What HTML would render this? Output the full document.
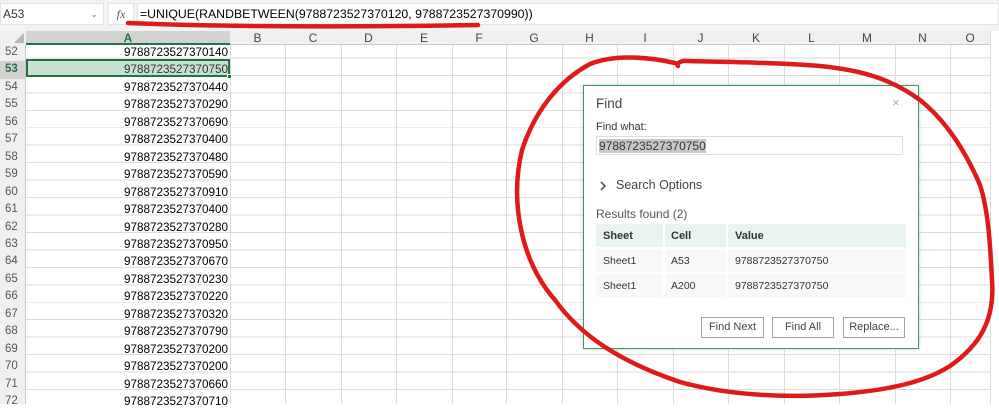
<!DOCTYPE html>
<html><head><meta charset="utf-8"><style>
*{margin:0;padding:0;box-sizing:border-box}
body{width:999px;height:404px;overflow:hidden;background:#fff;position:relative;font-family:"Liberation Sans",sans-serif;color:#000}
.abs{position:absolute}
.grid{left:26px;top:41px;width:964px;height:363px;
background-image:repeating-linear-gradient(to bottom,transparent 0,transparent 16.45px,#dadcdd 16.45px,#dadcdd 17.45px);}
.vl{position:absolute;top:31px;width:1px;height:373px;background:#dadcdd}
.hdr{left:0;top:31px;width:990px;height:14px;background:#f0f0f0;border-bottom:1px solid #c8c8c8}
.ch{position:absolute;top:0;height:14px;font-size:12px;line-height:14px;text-align:center;color:#444}
.rh{left:0;top:41px;width:26px;height:363px;background:#f0f0f0;border-right:1px solid #c8c8c8}
.rn{position:absolute;left:0;width:25px;font-size:11.5px;color:#555;text-align:left;padding-left:5px;height:17.45px;line-height:17.45px}
.num{position:absolute;left:26px;width:202px;text-align:right;font-size:11.7px;height:17.45px;line-height:17.45px}
.dlg{left:583px;top:85px;width:336px;height:264px;background:#fff;border:1px solid #3e9b5d;box-shadow:0 0 4px rgba(0,0,0,.2)}
.t{position:absolute;font-size:12px;color:#333}
.btn{position:absolute;top:231px;height:21px;border:1px solid #a0a0a0;font-size:11px;line-height:19px;text-align:center;color:#444;background:#fff}
</style></head><body>
<div class="abs" style="left:0;top:0;width:999px;height:31px;background:#f3f3f3"></div>
<div class="abs" style="left:0;top:3px;width:104px;height:22px;background:#fff;border:1px solid #e3e3e3;font-size:12px;line-height:20px;padding-left:2px;color:#333">A53<span style="position:absolute;right:5px;top:0;font-size:9px;color:#777">⌄</span></div>
<div class="abs" style="left:108px;top:3px;width:26px;height:22px;background:#fff;border:1px solid #e3e3e3;font-family:'Liberation Serif',serif;font-style:italic;font-size:12px;line-height:20px;text-align:center;color:#555">fx</div>
<div class="abs" style="left:137px;top:3px;width:862px;height:22px;background:#fff;border:1px solid #e3e3e3;font-size:12.3px;line-height:20px;padding-left:2px">=UNIQUE(RANDBETWEEN(9788723527370120, 9788723527370990))</div>

<div class="abs grid"></div>
<div class="vl" style="left:230px"></div><div class="vl" style="left:285px"></div><div class="vl" style="left:341px"></div><div class="vl" style="left:396px"></div><div class="vl" style="left:452px"></div><div class="vl" style="left:506px"></div><div class="vl" style="left:562px"></div><div class="vl" style="left:617px"></div><div class="vl" style="left:673px"></div><div class="vl" style="left:728px"></div><div class="vl" style="left:784px"></div><div class="vl" style="left:839px"></div><div class="vl" style="left:895px"></div><div class="vl" style="left:950px"></div><div class="vl" style="left:990px"></div>

<div class="abs rh">
<div class="rn" style="top:3px">52</div><div class="rn" style="top:20.45px;color:#217346;font-weight:bold;background:#d2d2d2">53</div><div class="rn" style="top:37.9px">54</div><div class="rn" style="top:55.35px">55</div><div class="rn" style="top:72.8px">56</div><div class="rn" style="top:90.25px">57</div><div class="rn" style="top:107.7px">58</div><div class="rn" style="top:125.15px">59</div><div class="rn" style="top:142.6px">60</div><div class="rn" style="top:160.05px">61</div><div class="rn" style="top:177.5px">62</div><div class="rn" style="top:194.95px">63</div><div class="rn" style="top:212.4px">64</div><div class="rn" style="top:229.85px">65</div><div class="rn" style="top:247.3px">66</div><div class="rn" style="top:264.75px">67</div><div class="rn" style="top:282.2px">68</div><div class="rn" style="top:299.65px">69</div><div class="rn" style="top:317.1px">70</div><div class="rn" style="top:334.55px">71</div><div class="rn" style="top:352px">72</div>
</div>

<div class="abs" style="left:26px;top:59px;width:204px;height:18px;background:#c5e1cf;border:2px solid #217346"></div>
<div class="abs" style="left:227px;top:74px;width:5px;height:5px;background:#217346;border:1px solid #fff"></div>

<div class="num" style="top:44px">9788723527370140</div>
<div class="num" style="top:61.45px;color:#333">9788723527370750</div>
<div class="num" style="top:78.9px">9788723527370440</div>
<div class="num" style="top:96.35px">9788723527370290</div>
<div class="num" style="top:113.8px">9788723527370690</div>
<div class="num" style="top:131.25px">9788723527370400</div>
<div class="num" style="top:148.7px">9788723527370480</div>
<div class="num" style="top:166.15px">9788723527370590</div>
<div class="num" style="top:183.6px">9788723527370910</div>
<div class="num" style="top:201.05px">9788723527370400</div>
<div class="num" style="top:218.5px">9788723527370280</div>
<div class="num" style="top:235.95px">9788723527370950</div>
<div class="num" style="top:253.4px">9788723527370670</div>
<div class="num" style="top:270.85px">9788723527370230</div>
<div class="num" style="top:288.3px">9788723527370220</div>
<div class="num" style="top:305.75px">9788723527370320</div>
<div class="num" style="top:323.2px">9788723527370790</div>
<div class="num" style="top:340.65px">9788723527370200</div>
<div class="num" style="top:358.1px">9788723527370200</div>
<div class="num" style="top:375.55px">9788723527370660</div>
<div class="num" style="top:393px">9788723527370710</div>

<div class="abs hdr">
<div class="abs" style="left:0;top:0;width:26px;height:14px;background:#f0f0f0"><div style="position:absolute;right:2px;bottom:2px;width:0;height:0;border-left:10px solid transparent;border-bottom:10px solid #b8b8b8"></div></div>
<div class="ch" style="left:26px;width:204px;background:#d2d2d2;color:#217346;font-weight:bold;border-bottom:2px solid #217346">A</div>
<div class="ch" style="left:230px;width:55px">B</div><div class="ch" style="left:285px;width:56px">C</div><div class="ch" style="left:341px;width:55px">D</div><div class="ch" style="left:396px;width:56px">E</div><div class="ch" style="left:452px;width:54px">F</div><div class="ch" style="left:506px;width:56px">G</div><div class="ch" style="left:562px;width:55px">H</div><div class="ch" style="left:617px;width:56px">I</div><div class="ch" style="left:673px;width:55px">J</div><div class="ch" style="left:728px;width:56px">K</div><div class="ch" style="left:784px;width:55px">L</div><div class="ch" style="left:839px;width:56px">M</div><div class="ch" style="left:895px;width:55px">N</div><div class="ch" style="left:950px;width:40px">O</div>
</div>

<div class="abs dlg">
<div class="t" style="left:12px;top:10px;font-size:13.5px;color:#444">Find</div>
<div class="t" style="left:308px;top:9px;font-size:13px;color:#aaa">×</div>
<div class="t" style="left:12px;top:35px;font-size:11px">Find what:</div>
<div class="abs" style="left:12px;top:50px;width:307px;height:19px;border:1px solid #dcdcdc"><span style="position:absolute;left:2px;top:2px;background:#c8c8c8;font-size:12px;line-height:14px;color:#333">9788723527370750</span></div>
<svg class="abs" style="left:15px;top:95px" width="8" height="10"><path d="M2 1 L6 5 L2 9" fill="none" stroke="#555" stroke-width="1.6"/></svg>
<div class="t" style="left:32px;top:92px;font-size:12.5px;color:#444">Search Options</div>
<div class="t" style="left:12px;top:121px;font-size:12px;color:#555">Results found (2)</div>
<div class="abs" style="left:12px;top:138px;width:310px;height:23px;background:#e9f4ee"></div>
<div class="abs" style="left:12px;top:163px;width:310px;height:23px;background:#f8f8f7"></div>
<div class="abs" style="left:12px;top:188px;width:310px;height:23px;background:#f8f8f7"></div>
<div class="abs" style="left:79px;top:138px;width:2px;height:73px;background:#fff"></div>
<div class="abs" style="left:142px;top:138px;width:2px;height:73px;background:#fff"></div>
<div class="t" style="left:19px;top:144px;font-size:11px;font-weight:bold">Sheet</div>
<div class="t" style="left:87px;top:144px;font-size:11px;font-weight:bold">Cell</div>
<div class="t" style="left:151px;top:144px;font-size:11px;font-weight:bold">Value</div>
<div class="t" style="left:19px;top:169px;font-size:10.5px">Sheet1</div>
<div class="t" style="left:87px;top:169px;font-size:10.5px">A53</div>
<div class="t" style="left:151px;top:169px;font-size:10.5px">9788723527370750</div>
<div class="t" style="left:19px;top:194px;font-size:10.5px">Sheet1</div>
<div class="t" style="left:87px;top:194px;font-size:10.5px">A200</div>
<div class="t" style="left:151px;top:194px;font-size:10.5px">9788723527370750</div>
<div class="btn" style="left:117px;width:63px">Find Next</div>
<div class="btn" style="left:188px;width:62px">Find All</div>
<div class="btn" style="left:259px;width:62px">Replace...</div>
</div>

<svg class="abs" style="left:0;top:0" width="999" height="404" viewBox="0 0 999 404">
<g fill="none" stroke="#e0191b" stroke-width="4.5" stroke-linecap="round" stroke-linejoin="round">
<path d="M128 23 C220 27 360 27 478 25"/>
<path d="M675 63 C640 55 610 56 590 64 C560 80 535 110 522 150 C510 200 520 260 555 300 C580 335 620 362 680 382 C730 396 790 398 840 394 C890 390 925 382 950 366 C980 345 995 320 992 280 C990 240 988 210 980 185 C965 150 945 120 920 100 C890 78 860 70 820 66 C770 62 720 62 688 61 C680 60 676 64 678 66"/>
</g></svg>
</body></html>
